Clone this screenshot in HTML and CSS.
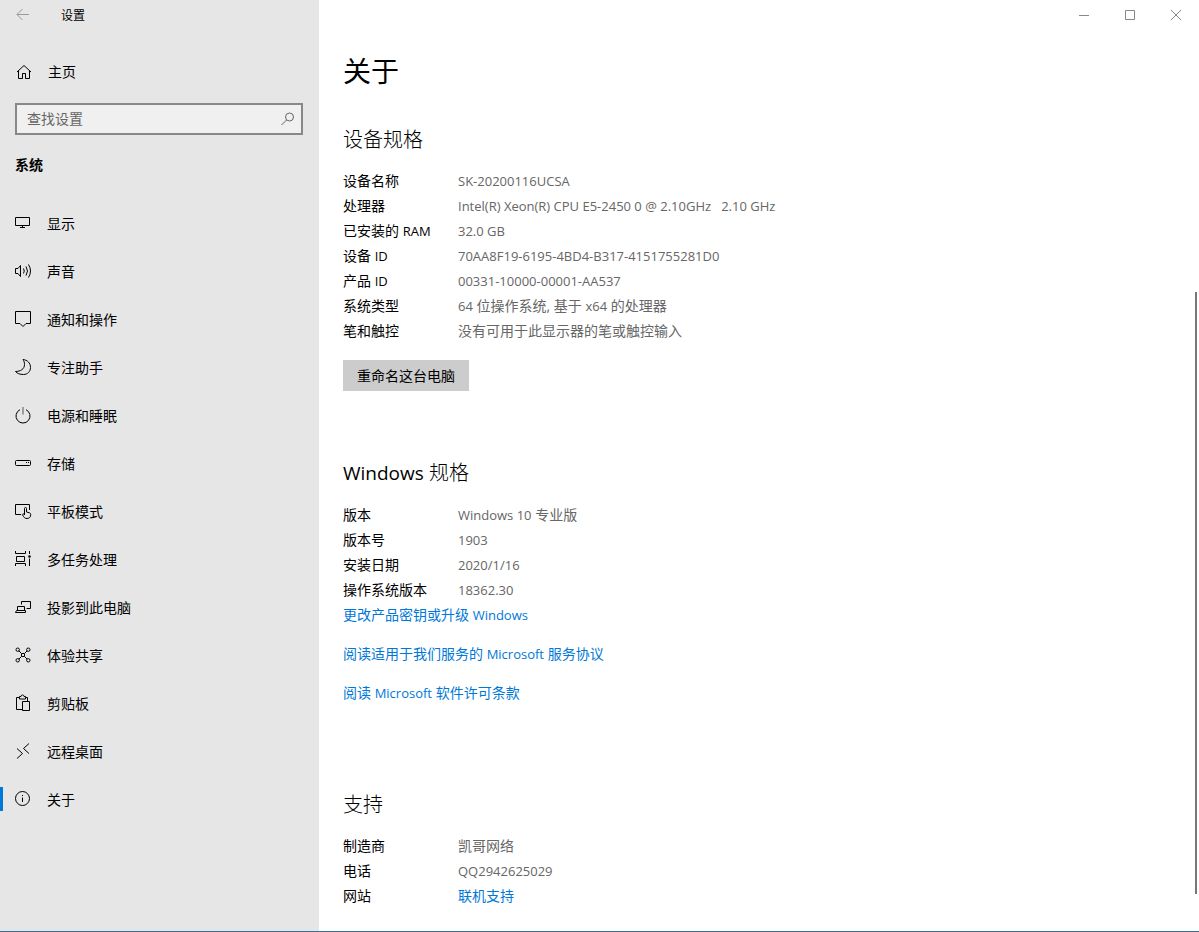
FILE: index.html
```html
<!DOCTYPE html>
<html lang="zh-CN">
<head>
<meta charset="utf-8">
<meta name="viewport" content="width=device-width, initial-scale=1">
<title>设置</title>
<link rel="stylesheet" href="styles.css">
</head>
<body>
<div class="window">
  <aside class="sidebar">
    <header class="titlebar">
      <button class="back" type="button" aria-label="返回" disabled>
        <svg class="icon" viewBox="0 0 18 18"><path d="M15 8.500H3M8.500 3 3 8.500 8.500 14"/></svg>
      </button>
      <span class="app-title">设置</span>
    </header>
    <a class="home" href="#">
      <svg class="icon" viewBox="0 0 18 18"><path d="M2 9 9 2.500 16 9M3.500 8v7.500h4v-5h3v5h4V8"/></svg>
      <span>主页</span>
    </a>
    <form class="search">
      <input class="search-input" type="search" placeholder="查找设置" aria-label="查找设置">
      <button class="search-button" type="submit" aria-label="搜索">
        <svg class="icon" viewBox="0 0 18 18"><circle cx="10.500" cy="7" r="4"/><path d="M7.500 10 2.500 15"/></svg>
      </button>
    </form>
    <h2 class="category">系统</h2>
    <nav class="nav">
      <a class="nav-item" href="#"><svg class="icon" viewBox="0 0 18 18"><path d="M1.500 3.500h14v8h-14zM8.500 11.500v2M6 13.500h5"/></svg><span>显示</span></a>
      <a class="nav-item" href="#"><svg class="icon" viewBox="0 0 18 18"><path d="M1.500 6.500H4l2.500-3v11L4 11.500H1.500z"/><path d="M9.500 6.500q1.500 2.500 0 5M12 4.500q3 4.500 0 9M14.500 2.500q4 6.500 0 13"/></svg><span>声音</span></a>
      <a class="nav-item" href="#"><svg class="icon" viewBox="0 0 18 18"><path d="M1.500 1.500h15v12H12l-3 3-3-3H1.500z"/></svg><span>通知和操作</span></a>
      <a class="nav-item" href="#"><svg class="icon" viewBox="0 0 18 18"><path d="M9 1.500c4.500.5 7.500 3.500 7.500 8 0 4-3 7-7 7-3.500 0-6.500-1-8-3 5 0 9-2.500 9-7 0-2-.5-3.500-1.500-5z"/></svg><span>专注助手</span></a>
      <a class="nav-item" href="#"><svg class="icon" viewBox="0 0 18 18"><path d="M6 3.700a7 7 0 1 0 6 0"/><path class="soft" d="M9 1v7.500"/></svg><span>电源和睡眠</span></a>
      <a class="nav-item" href="#"><svg class="icon" viewBox="0 0 18 18"><rect x="1.500" y="6.500" width="15" height="5" rx="1"/><path d="M12 8.500h1M14 8.500h1"/></svg><span>存储</span></a>
      <a class="nav-item" href="#"><svg class="icon" viewBox="0 0 18 18"><path d="M7 12.500H1.500v-10h14V8"/><path d="M10.500 13V6.500a1 1 0 0 1 2 0V10l3 .8c1 .3 1.200 1 1.200 2 0 2.200-1.400 3.700-3.700 3.700-2.300 0-3.200-1.200-4.500-3.700 0-1.300 1.200-1.300 2 .2"/></svg><span>平板模式</span></a>
      <a class="nav-item" href="#"><svg class="icon" viewBox="0 0 18 18"><path d="M1.500 1v2.500h10V1M2.500 6.500h8v5h-8zM1.500 16v-2.500h10V16M15.500 1v3M15.500 8.500V16"/><circle class="solid" cx="15.500" cy="6.500" r="1.300"/></svg><span>多任务处理</span></a>
      <a class="nav-item" href="#"><svg class="icon" viewBox="0 0 18 18"><path d="M7.500 6.500v-3h9v7h-4M3.500 12.500v-4h7v4M1.500 14.500l1-2h9v2z"/></svg><span>投影到此电脑</span></a>
      <a class="nav-item" href="#"><svg class="icon" viewBox="0 0 18 18"><circle cx="3.700" cy="3.700" r="1.700"/><circle cx="14.300" cy="3.700" r="1.700"/><circle cx="3.700" cy="14.300" r="1.700"/><circle cx="14.300" cy="14.300" r="1.700"/><circle cx="9" cy="9" r="1.700"/><path d="m5 5 2.700 2.700M13 5l-2.700 2.700M5 13l2.700-2.700M13 13l-2.700-2.700"/></svg><span>体验共享</span></a>
      <a class="nav-item" href="#"><svg class="icon" viewBox="0 0 18 18"><path d="M8 15.500H2.500v-12h3v-1H7a1.500 1.500 0 0 1 3 0h1.500v1h2V7M5.500 3.500v1.500h6V3.500M8.500 7.500h7v9h-7z"/></svg><span>剪贴板</span></a>
      <a class="nav-item" href="#"><svg class="icon" viewBox="0 0 18 18"><path d="m3 6.500 5.500 5L3 16.500M15 1.500l-5.500 5 5.500 5"/></svg><span>远程桌面</span></a>
      <a class="nav-item active" href="#" aria-current="page"><svg class="icon" viewBox="0 0 18 18"><circle cx="8.500" cy="8.500" r="7"/><path d="M8.500 7.500V12M8.500 5v1"/></svg><span>关于</span></a>
    </nav>
  </aside>

  <main class="content">
    <div class="controls">
      <button type="button" aria-label="最小化"><svg class="icon" viewBox="0 0 18 18"><path d="M4 9.500h10"/></svg></button>
      <button type="button" aria-label="最大化"><svg class="icon" viewBox="0 0 18 18"><path d="M4.500 4.500h9v9h-9z"/></svg></button>
      <button type="button" aria-label="关闭"><svg class="icon" viewBox="0 0 18 18"><path d="m4 4 10 10M14 4 4 14"/></svg></button>
    </div>
    <div class="page">
      <h1>关于</h1>
      <section class="device">
        <h2>设备规格</h2>
        <dl class="specs">
          <dt>设备名称</dt><dd><span class="latin">SK-20200116UCSA</span></dd>
          <dt>处理器</dt><dd><span class="latin">Intel(R) Xeon(R) CPU E5-2450 0 @ 2.10GHz &nbsp; 2.10 GHz</span></dd>
          <dt>已安装的 <span class="latin">RAM</span></dt><dd><span class="latin">32.0 GB</span></dd>
          <dt>设备 <span class="latin">ID</span></dt><dd><span class="latin">70AA8F19-6195-4BD4-B317-4151755281D0</span></dd>
          <dt>产品 <span class="latin">ID</span></dt><dd><span class="latin">00331-10000-00001-AA537</span></dd>
          <dt>系统类型</dt><dd><span class="latin">64</span> 位操作系统, 基于 <span class="latin">x64</span> 的处理器</dd>
          <dt>笔和触控</dt><dd>没有可用于此显示器的笔或触控输入</dd>
        </dl>
        <button class="rename" type="button">重命名这台电脑</button>
      </section>
      <section class="edition">
        <h2><span class="latin-heading">Windows</span> 规格</h2>
        <dl class="specs">
          <dt>版本</dt><dd><span class="latin">Windows 10</span> 专业版</dd>
          <dt>版本号</dt><dd><span class="latin">1903</span></dd>
          <dt>安装日期</dt><dd><span class="latin">2020/1/16</span></dd>
          <dt>操作系统版本</dt><dd><span class="latin">18362.30</span></dd>
        </dl>
        <div class="links">
          <a href="#">更改产品密钥或升级 <span class="latin">Windows</span></a>
          <a href="#">阅读适用于我们服务的 <span class="latin">Microsoft</span> 服务协议</a>
          <a href="#">阅读 <span class="latin">Microsoft</span> 软件许可条款</a>
        </div>
      </section>
      <section class="support">
        <h2>支持</h2>
        <dl class="specs">
          <dt>制造商</dt><dd>凯哥网络</dd>
          <dt>电话</dt><dd><span class="latin">QQ2942625029</span></dd>
          <dt>网站</dt><dd><a href="#">联机支持</a></dd>
        </dl>
      </section>
    </div>
    <div class="scroll-thumb"></div>
  </main>
</div>
</body>
</html>
```
FILE: styles.css
```css
* { box-sizing: border-box; }

body {
  margin: 0;
  color: #000;
  background: #fff;
  font: 14px/24px "Open Sans", "Noto Sans CJK SC", sans-serif;
}

h1, h2, dl, dd { margin: 0; font-weight: 400; }
a { color: inherit; text-decoration: none; }
button, input { font: inherit; color: inherit; }
button { padding: 0; border: 0; background: none; }

.window {
  display: grid;
  grid-template-columns: 319px 1fr;
  min-height: 100vh;
  border-bottom: 1px solid #336f99;
}

.icon {
  flex: none;
  display: block;
  width: 18px;
  height: 18px;
  fill: none;
  stroke: currentColor;
  stroke-width: 1;
}
.icon .soft { stroke: #555; }
.icon .solid { fill: currentColor; stroke: none; }

.latin { font-size: 13px; }
.latin-heading { font-size: 19px; font-weight: 400; }

.sidebar { background: #e6e6e6; }

.titlebar {
  display: flex;
  align-items: center;
  gap: 29px;
  height: 30px;
  padding-left: 14px;
  font-size: 12px;
}
.app-title { padding-top: 2px; }
.back { color: #999; }

.home {
  display: flex;
  align-items: center;
  gap: 15px;
  height: 48px;
  margin-top: 18px;
  padding-left: 15px;
}

.search {
  display: flex;
  align-items: center;
  height: 32px;
  margin: 7px 16px 0 15px;
  padding: 0 4px 0 10px;
  border: 2px solid #888;
  background: #f0f0f0;
  color: #666;
}
.search-input {
  flex: 1;
  min-width: 0;
  height: 26px;
  padding: 0 0 2px;
  border: 0;
  outline: 0;
  background: none;
}
.search-input::placeholder { color: #666; opacity: 1; }

.category {
  margin: 18px 15px 22px;
  font-size: 14px;
  font-weight: 700;
}

.nav-item {
  display: flex;
  align-items: center;
  gap: 15px;
  height: 48px;
  padding-left: 14px;
}
.nav-item span { padding-top: 2px; }
.active {
  background: linear-gradient(#0078d7, #0078d7) left center / 3px 24px no-repeat;
}

.content { position: relative; }

.controls {
  display: flex;
  justify-content: flex-end;
  height: 30px;
  color: #888;
}
.controls button {
  display: grid;
  place-items: center;
  width: 46px;
}

.page { padding: 21px 24px; }

h1 { font-size: 28px; line-height: 40px; }
.page h2 { font-size: 20px; font-weight: 300; line-height: 30px; }

.device { margin-top: 34px; }
.edition { margin-top: 67px; }
.support { margin-top: 85px; }

.specs {
  display: grid;
  grid-template-columns: 115px 1fr;
  grid-auto-rows: 25px;
  margin-top: 14px;
}
.edition .specs { margin-top: 15px; }
.specs dd { color: #666; }

.rename {
  margin-top: 16px;
  padding: 0 14px;
  background: #ccc;
  line-height: 31px;
}

.links {
  display: flex;
  flex-direction: column;
  align-items: flex-start;
  gap: 15px;
}
.links a, .specs a { color: #0078d7; }

.scroll-thumb {
  position: absolute;
  top: 292px;
  right: 2px;
  bottom: 37px;
  width: 2px;
  background: #777;
}
```
